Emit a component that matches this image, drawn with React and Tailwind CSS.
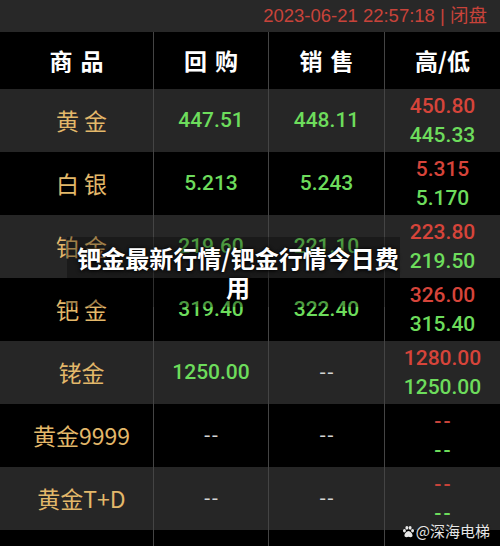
import React from 'react';

const rows = [
  { name: '黄 金', buy: '447.51', sell: '448.11', high: '450.80', low: '445.33' },
  { name: '白 银', buy: '5.213', sell: '5.243', high: '5.315', low: '5.170' },
  { name: '铂 金', buy: '219.60', sell: '221.10', high: '223.80', low: '219.50' },
  { name: '钯 金', buy: '319.40', sell: '322.40', high: '326.00', low: '315.40' },
  { name: '铑金', buy: '1250.00', sell: null, high: '1280.00', low: '1250.00' },
  { name: '黄金9999', buy: null, sell: null, high: null, low: null },
  { name: '黄金T+D', buy: null, sell: null, high: null, low: null },
];

const cjk = { fontFamily: '"Noto Sans CJK SC", "Noto Sans", sans-serif' };
const num = { fontFamily: 'Roboto, "Noto Sans CJK SC", sans-serif' };

const Dash = ({ color }) => (
  <span className={`tracking-[2px] pl-[2px] ${color}`} style={num}>--</span>
);

const Price = ({ value }) =>
  value ? (
    <span className="text-[21px] font-medium text-[#6ddc5c]" style={num}>{value}</span>
  ) : (
    <span className="text-[21px]"><Dash color="text-[#d4d4d4]" /></span>
  );

const App = () => {
  return (
    <div className="relative w-[500px] h-[546px] overflow-hidden bg-black select-none">
      {/* top status bar */}
      <div className="h-8 bg-[#282828] flex items-center justify-end pr-[13px]">
        <span className="text-[18.5px] text-[#c8433a]" style={{ fontFamily: '"Liberation Sans", "Noto Sans CJK SC", sans-serif' }}>
          2023-06-21 22:57:18 | 闭盘
        </span>
      </div>

      {/* header */}
      <div className="grid grid-cols-[153px_115px_116px_116px] h-[57px] bg-black text-white" style={cjk}>
        <div className="flex items-center justify-center text-[23px] font-bold tracking-[8px] pl-[8px]">商品</div>
        <div className="flex items-center justify-center text-[23px] font-bold tracking-[8px] pl-[8px] border-l border-[#444]">回购</div>
        <div className="flex items-center justify-center text-[23px] font-bold tracking-[8px] pl-[8px] border-l border-[#444]">销售</div>
        <div className="flex items-center justify-center text-[23px] font-bold border-l border-[#444]">高/低</div>
      </div>

      {/* rows */}
      {rows.map((r, i) => (
        <div
          key={i}
          className={`grid grid-cols-[153px_115px_116px_116px] h-[63px] ${i % 2 === 0 ? 'bg-[#262626]' : 'bg-black'}`}
        >
          <div className="flex items-center justify-center pl-[10px] text-[23px] text-[#e3b86a] whitespace-pre" style={cjk}>
            {r.name}
          </div>
          <div className="flex items-center justify-center border-l border-[#444]">
            <Price value={r.buy} />
          </div>
          <div className="flex items-center justify-center border-l border-[#444]">
            <Price value={r.sell} />
          </div>
          <div className="flex flex-col items-center justify-center border-l border-[#444] text-[21px] font-medium leading-[29px]" style={num}>
            {r.high ? (
              <span className="text-[#d6443a]">{r.high}</span>
            ) : (
              <Dash color="text-[#c8433a]" />
            )}
            {r.low ? (
              <span className="text-[#6ddc5c]">{r.low}</span>
            ) : (
              <Dash color="text-[#6ddc5c]" />
            )}
          </div>
        </div>
      ))}

      {/* filler under the table */}
      <div className="grid grid-cols-[153px_115px_116px_116px] h-[30px] bg-black">
        <div />
        <div className="border-l border-[#444]" />
        <div className="border-l border-[#444]" />
        <div className="border-l border-[#444]" />
      </div>

      {/* article title overlay */}
      <div className="absolute left-[67px] top-[237px] w-[333px] bg-black/30 pl-[9px]">
        <p
          className="text-center text-white text-[24px] font-bold leading-[29px] py-[6px] [text-shadow:0_0_3px_rgba(0,0,0,0.9),0_1px_4px_rgba(0,0,0,0.8)]"
          style={cjk}
        >
          钯金最新行情/钯金行情今日费
          <br />
          用
        </p>
      </div>

      {/* watermark */}
      <div className="absolute right-[10px] top-[520px] flex items-center gap-[1px] text-white/90 text-[15px] [text-shadow:0_1px_2px_rgba(0,0,0,0.8)]" style={cjk}>
        <svg width="13" height="13" viewBox="0 0 16 16" fill="currentColor">
          <ellipse cx="3" cy="7" rx="1.8" ry="2.2" />
          <ellipse cx="6" cy="3.5" rx="1.8" ry="2.2" />
          <ellipse cx="10" cy="3.5" rx="1.8" ry="2.2" />
          <ellipse cx="13" cy="7" rx="1.8" ry="2.2" />
          <path d="M8 7.5c-2.5 0-5 3.5-5 5.5 0 1.5 1.2 2 2.5 2 1 0 1.6-.6 2.5-.6s1.5.6 2.5.6c1.3 0 2.5-.5 2.5-2 0-2-2.5-5.5-5-5.5z" />
        </svg>
        <span>@深海电梯</span>
      </div>
    </div>
  );
};

export default App;
